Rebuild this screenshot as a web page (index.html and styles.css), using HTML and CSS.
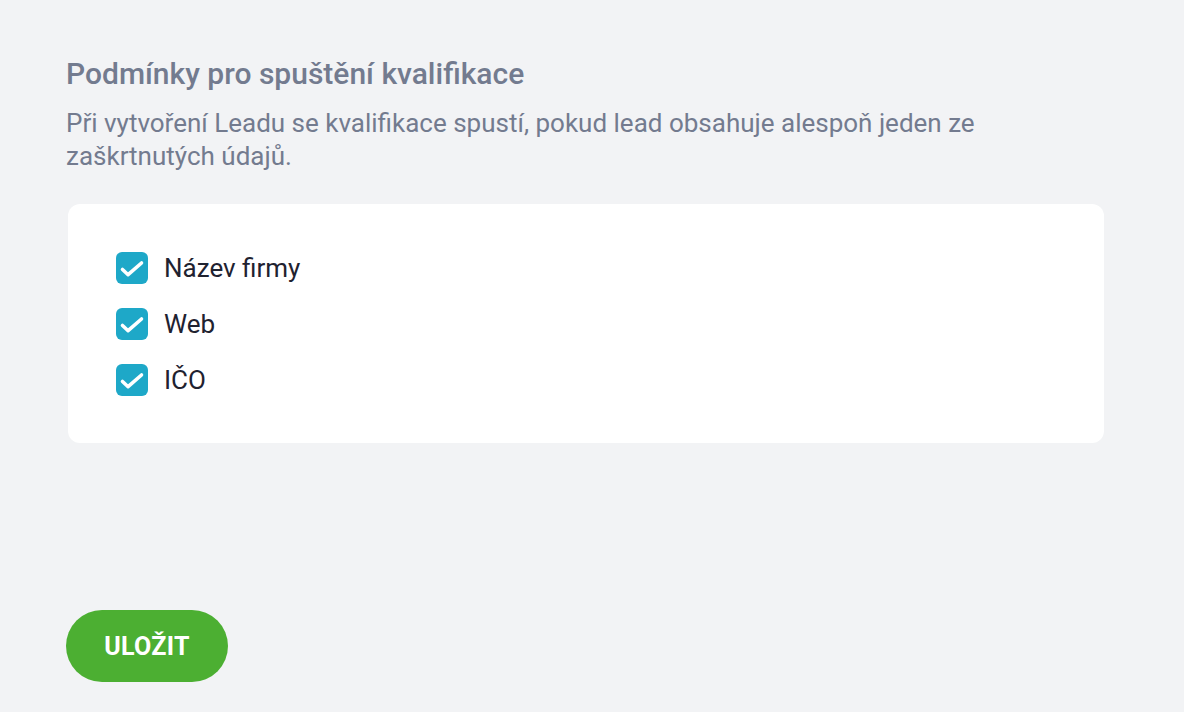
FILE: index.html
```html
<!DOCTYPE html>
<html lang="cs">
<head>
<meta charset="utf-8">
<link rel="stylesheet" href="styles.css">
</head>
<body>
<main class="page">
  <section class="settings">
    <h2 class="title">Podmínky pro spuštění kvalifikace</h2>
    <p class="desc">Při vytvoření Leadu se kvalifikace spustí, pokud lead obsahuje alespoň jeden ze zaškrtnutých údajů.</p>
    <div class="card">
      <label class="option"><span class="check"><svg viewBox="0 0 32 32" width="32" height="32"><path d="M6.5 17.5l5.6 5.2L25.5 11" fill="none" stroke="#fff" stroke-width="3.6" stroke-linecap="round" stroke-linejoin="round"/></svg></span><span class="label">Název firmy</span></label>
      <label class="option"><span class="check"><svg viewBox="0 0 32 32" width="32" height="32"><path d="M6.5 17.5l5.6 5.2L25.5 11" fill="none" stroke="#fff" stroke-width="3.6" stroke-linecap="round" stroke-linejoin="round"/></svg></span><span class="label">Web</span></label>
      <label class="option"><span class="check"><svg viewBox="0 0 32 32" width="32" height="32"><path d="M6.5 17.5l5.6 5.2L25.5 11" fill="none" stroke="#fff" stroke-width="3.6" stroke-linecap="round" stroke-linejoin="round"/></svg></span><span class="label">IČO</span></label>
    </div>
  </section>
  <button class="save" type="button">ULOŽIT</button>
</main>
</body>
</html>
```

FILE: styles.css
```css
html, body {
  margin: 0;
  padding: 0;
  background: #f2f3f5;
  font-family: Roboto, "Liberation Sans", sans-serif;
}
.page {
  box-sizing: border-box;
  height: 712px;
  padding: 56px 80px 30px 66px;
  display: flex;
  flex-direction: column;
  justify-content: space-between;
  align-items: flex-start;
}
.settings {
  width: 1038px;
}
.title {
  margin: 0;
  font-size: 30px;
  font-weight: 500;
  line-height: 36px;
  color: #737b8f;
}
.desc {
  margin: 15px 0 0;
  font-size: 26px;
  line-height: 33px;
  color: #737b8f;
  max-width: 940px;
}
.card {
  margin: 31px 0 0 2px;
  background: #fff;
  border-radius: 12px;
  padding: 48px 48px 47px;
  display: flex;
  flex-direction: column;
  gap: 24px;
}
.option {
  display: flex;
  align-items: center;
  gap: 16px;
  height: 32px;
}
.check {
  width: 32px;
  height: 32px;
  border-radius: 6px;
  background: #1ea8c8;
  display: flex;
}
.label {
  font-size: 26px;
  color: #1f2230;
}
.save {
  width: 162px;
  height: 72px;
  border: 0;
  border-radius: 36px;
  background: #4caf32;
  color: #fff;
  font-family: Roboto, "Liberation Sans", sans-serif;
  font-weight: 700;
  font-size: 25px;
  letter-spacing: 0.3px;
}
```
